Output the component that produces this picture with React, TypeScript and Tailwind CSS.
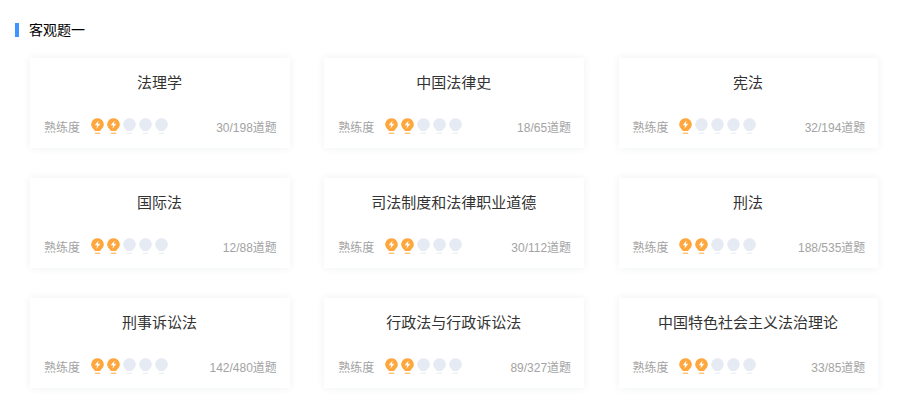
const FONT = "font-['Liberation_Sans','Noto_Sans_CJK_SC',sans-serif]";

const SUBJECTS: { name: string; level: number; count: string }[] = [
  { name: '法理学', level: 2, count: '30/198道题' },
  { name: '中国法律史', level: 2, count: '18/65道题' },
  { name: '宪法', level: 1, count: '32/194道题' },
  { name: '国际法', level: 2, count: '12/88道题' },
  { name: '司法制度和法律职业道德', level: 2, count: '30/112道题' },
  { name: '刑法', level: 2, count: '188/535道题' },
  { name: '刑事诉讼法', level: 2, count: '142/480道题' },
  { name: '行政法与行政诉讼法', level: 2, count: '89/327道题' },
  { name: '中国特色社会主义法治理论', level: 2, count: '33/85道题' },
];

function Bulb({ on }: { on: boolean }) {
  return (
    <svg width="13" height="17" viewBox="0 0 13 17" className="shrink-0">
      <path
        d="M6.5 0.2a6.3 6.3 0 0 1 3.5 11.5c-.5.4-.7.8-.8 1.3H3.8c-.1-.5-.3-.9-.8-1.3A6.3 6.3 0 0 1 6.5 0.2z"
        fill={on ? '#ffa63d' : '#e6eaf2'}
      />
      {on && <path d="M7.6 2.4 3.7 7.3h2.4l-.7 3.5 3.9-5H6.9z" fill="#fff" />}
      <rect x="3.6" y="14.4" width="5.8" height="1.6" rx="0.8" fill={on ? '#ffc57f' : '#eef1f6'} />
    </svg>
  );
}

function SubjectCard({ name, level, count }: { name: string; level: number; count: string }) {
  return (
    <div className="h-[90px] bg-white px-[14px] pt-4 shadow-[0_0_8px_rgba(30,50,90,0.07)]">
      <div className="-ml-px text-center text-[15px] leading-[18px] text-[#333]">{name}</div>
      <div className="mt-[25px] flex h-[18px] items-center text-xs text-[#a3a3a3]">
        <span className="mt-1 leading-[18px]">熟练度</span>
        <div className="ml-[10.5px] flex gap-[3px]">
          {[0, 1, 2, 3, 4].map((i) => (
            <Bulb key={i} on={i < level} />
          ))}
        </div>
        <span className="mt-1 -mr-px ml-auto leading-[18px]">{count}</span>
      </div>
    </div>
  );
}

export default function App() {
  return (
    <div className={`${FONT} h-[416px] w-[900px] overflow-hidden bg-white pt-[23px] pl-[15px]`}>
      <div className="flex items-center">
        <div className="h-[14px] w-1 bg-[#3d96ff]" />
        <div className="ml-[10px] text-sm leading-[14px] text-black">客观题一</div>
      </div>
      <div className="mt-[21px] ml-[15px] grid w-[848.4px] grid-cols-3 gap-x-[34.4px] gap-y-[30px]">
        {SUBJECTS.map((s) => (
          <SubjectCard key={s.name} {...s} />
        ))}
      </div>
    </div>
  );
}
